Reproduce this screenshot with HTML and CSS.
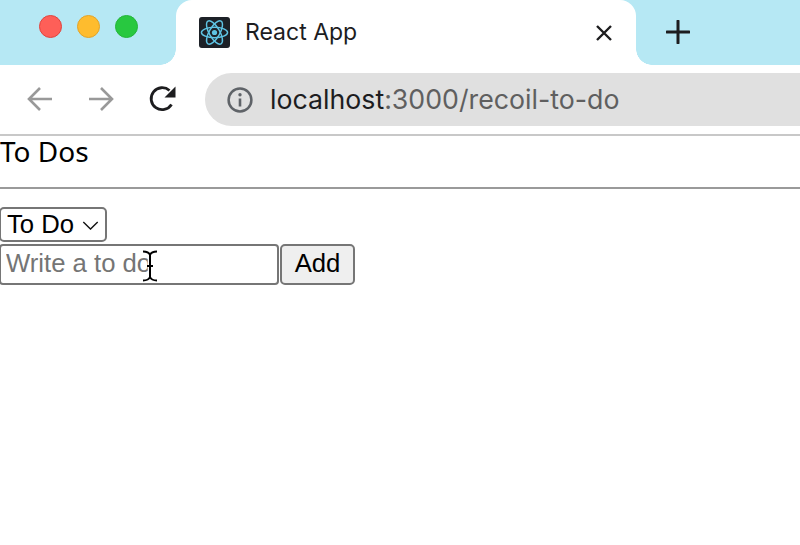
FILE: index.html
```html
<!DOCTYPE html>
<html lang="en">
<head>
<meta charset="utf-8">
<title>React App</title>
<link rel="stylesheet" href="styles.css">
</head>
<body>
<header class="chrome">
  <div class="tabstrip">
    <div class="lights">
      <span class="light red"></span>
      <span class="light yellow"></span>
      <span class="light green"></span>
    </div>
    <div class="tab">
      <svg class="favicon" viewBox="0 0 32 32" aria-hidden="true">
        <rect width="32" height="32" rx="3" fill="#1d2127"/>
        <g fill="none" stroke="#5fc4e4" stroke-width="1.5">
          <ellipse cx="16" cy="16" rx="13.5" ry="5.4"/>
          <ellipse cx="16" cy="16" rx="13.5" ry="5.4" transform="rotate(60 16 16)"/>
          <ellipse cx="16" cy="16" rx="13.5" ry="5.4" transform="rotate(120 16 16)"/>
        </g>
        <circle cx="16" cy="16" r="2.7" fill="#5fc4e4"/>
      </svg>
      <span class="tab-title">React App</span>
      <svg class="tab-close" viewBox="0 0 16 16" aria-hidden="true">
        <path d="M1 1 15 15M15 1 1 15" stroke="#1d1d1f" stroke-width="2.4" fill="none"/>
      </svg>
    </div>
    <svg class="new-tab" viewBox="0 0 24 24" aria-hidden="true">
      <path d="M12 1v22M1 12h22" stroke="#1d1d1f" stroke-width="3" fill="none" stroke-linecap="round"/>
    </svg>
  </div>
  <div class="toolbar">
    <svg class="nav-icon" viewBox="0 0 26 26" aria-hidden="true">
      <path d="M25 13H2M13 2 2 13l11 11" stroke="#999" stroke-width="2.6" fill="none"/>
    </svg>
    <svg class="nav-icon" viewBox="0 0 26 26" aria-hidden="true">
      <path d="M1 13h23M13 2l11 11-11 11" stroke="#999" stroke-width="2.6" fill="none"/>
    </svg>
    <svg class="nav-icon reload" viewBox="0 0 28 28" aria-hidden="true">
      <path d="M22.5 19.5A11 11 0 1 1 20.5 5.500" stroke="#1d1d1f" stroke-width="2.8" fill="none"/>
      <path d="M26.500 1.500v11h-11z" fill="#1d1d1f"/>
    </svg>
    <div class="omnibox">
      <svg class="info" viewBox="0 0 26 26" aria-hidden="true">
        <circle cx="13" cy="13" r="11.400" stroke="#5f6368" stroke-width="2.500" fill="none"/>
        <circle cx="13" cy="7.800" r="1.700" fill="#5f6368"/>
        <path d="M13 11.500v8" stroke="#5f6368" stroke-width="2.600"/>
      </svg>
      <span class="url"><span class="host">localhost</span>:3000/recoil-to-do</span>
    </div>
  </div>
</header>
<main class="page">
  <h1 class="title">To Dos</h1>
  <hr class="rule">
  <form class="form">
    <div class="select-wrap">
      <select class="select"><option>To Do</option></select>
      <svg class="chevron" viewBox="0 0 18 10" aria-hidden="true">
        <path d="M1 1l8 8 8-8" stroke="#111" stroke-width="1.500" fill="none"/>
      </svg>
    </div>
    <div class="entry">
      <input class="input" type="text" placeholder="Write a to do">
      <button class="button" type="button">Add</button>
      <svg class="ibeam" viewBox="0 0 16 32" aria-hidden="true">
        <path class="ibeam-halo" d="M1 1.500c4 0 6 1 7 3.500 1-2.500 3-3.500 7-3.500M8 5v22M1 30.500c4 0 6-1 7-3.500 1 2.500 3 3.500 7 3.500"/>
        <path class="ibeam-line" d="M1 1.500c4 0 6 1 7 3.500 1-2.500 3-3.500 7-3.500M8 5v22M1 30.500c4 0 6-1 7-3.500 1 2.500 3 3.500 7 3.500M5 16h6"/>
      </svg>
    </div>
  </form>
</main>
</body>
</html>
```
FILE: styles.css
```css
* {
  box-sizing: border-box;
}

html,
body {
  margin: 0;
  height: 100%;
  background: #fff;
  overflow: hidden;
}

body {
  font-family: "Liberation Sans", Arial, sans-serif;
  color: #000;
}

.chrome {
  font-family: Inter, "Liberation Sans", sans-serif;
  border-bottom: 2px solid #c8c8c8;
}

.tabstrip {
  display: flex;
  align-items: center;
  height: 65px;
  background: #b6e8f4;
}

.lights {
  display: flex;
  gap: 15.300px;
  width: 176px;
  padding: 0 0 13px 38.500px;
}

.light {
  width: 23px;
  height: 23px;
  border-radius: 50%;
}

.red {
  background: #fe5f58;
  border: 1px solid #e0443e;
}

.yellow {
  background: #febc2e;
  border: 1px solid #e1a32a;
}

.green {
  background: #28c840;
  border: 1px solid #25b53a;
}

.tab {
  position: relative;
  display: flex;
  align-items: center;
  align-self: stretch;
  width: 460px;
  padding-left: 23px;
  background: #fff;
  border-radius: 16px 16px 0 0;
}

.tab::before,
.tab::after {
  content: "";
  position: absolute;
  bottom: 0;
  width: 16px;
  height: 16px;
}

.tab::before {
  left: -16px;
  background: radial-gradient(circle at 0 0, transparent 15.500px, #fff 16px);
}

.tab::after {
  right: -16px;
  background: radial-gradient(circle at 100% 0, transparent 15.500px, #fff 16px);
}

.favicon {
  width: 31px;
  height: 31px;
}

.tab-title {
  margin-left: 15px;
  padding-bottom: 2px;
  font-size: 23px;
  color: #1d1d1f;
}

.tab-close {
  width: 16px;
  height: 16px;
  margin-left: auto;
  margin-right: 24px;
}

.new-tab {
  width: 24px;
  height: 24px;
  margin-left: 30px;
  margin-bottom: 2px;
}

.toolbar {
  display: flex;
  align-items: center;
  height: 69px;
  padding-left: 27px;
}

.nav-icon {
  width: 26px;
  height: 26px;
  margin-right: 35px;
  margin-bottom: 2px;
  flex: none;
}

.reload {
  width: 28px;
  height: 28px;
  margin-left: 0;
  margin-right: 28px;
}

.omnibox {
  display: flex;
  align-items: center;
  flex: 1;
  height: 53px;
  padding-left: 22px;
  background: #e0e0e0;
  border-radius: 27px 0 0 27px;
}

.info {
  width: 26px;
  height: 26px;
  flex: none;
}

.url {
  margin-left: 17px;
  padding-bottom: 2px;
  font-size: 26.730px;
  color: #5f5f5f;
  white-space: nowrap;
}

.host {
  color: #1d1d1f;
}

.title {
  margin: 0;
  font-family: "Noto Sans", "Liberation Sans", sans-serif;
  font-size: 28px;
  font-weight: 400;
  line-height: 30px;
}

.rule {
  margin: 21px 0 0;
  height: 2px;
  border: 0;
  background: #9a9a9a;
}

.form {
  display: flex;
  flex-direction: column;
  align-items: flex-start;
  gap: 2px;
  margin: 18px 0 0 -1px;
}

.select-wrap {
  position: relative;
}

.select {
  display: block;
  width: 108px;
  height: 35px;
  padding: 0 0 2px 6px;
  appearance: none;
  font: 25.700px "Liberation Sans", Arial, sans-serif;
  color: #000;
  background: #fff;
  border: 2px solid #767676;
  border-radius: 5px;
}

.chevron {
  position: absolute;
  right: 8px;
  top: 14px;
  width: 17px;
  height: 9px;
  pointer-events: none;
}

.entry {
  position: relative;
  display: flex;
  gap: 1px;
}

.input {
  width: 280px;
  height: 41px;
  padding: 0 4px 2px 5px;
  font: 25.700px "Liberation Sans", Arial, sans-serif;
  background: #fff;
  border: 2px solid #767676;
  border-radius: 4px;
}

.input::placeholder {
  color: #757575;
  opacity: 1;
}

.button {
  width: 75px;
  height: 41px;
  padding: 0 0 2px;
  font: 25.700px "Liberation Sans", Arial, sans-serif;
  color: #000;
  background: #efefef;
  border: 2px solid #767676;
  border-radius: 5px;
}

.ibeam {
  position: absolute;
  left: 143px;
  top: 6px;
  width: 16px;
  height: 32px;
}

.ibeam-halo {
  fill: none;
  stroke: #fff;
  stroke-width: 4.500px;
}

.ibeam-line {
  fill: none;
  stroke: #000;
  stroke-width: 2px;
}
```
